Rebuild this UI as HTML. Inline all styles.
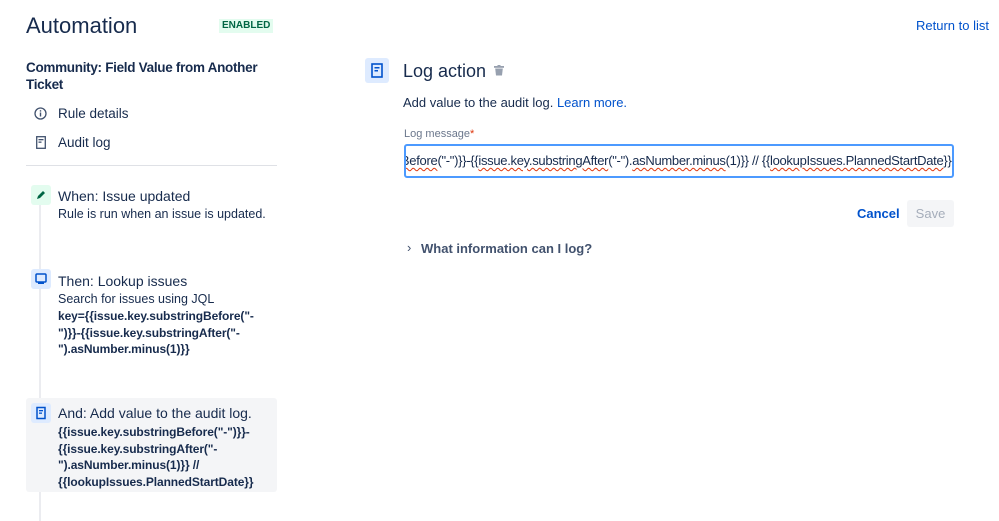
<!DOCTYPE html>
<html><head><meta charset="utf-8"><style>
body{margin:0;width:999px;height:521px;overflow:hidden;background:#fff;font-family:"Liberation Sans",sans-serif;color:#172b4d;position:relative}
.a{position:absolute;white-space:nowrap}
.ib{position:absolute;width:20px;height:20px;border-radius:3px}
.b{font-weight:bold;font-size:12px;line-height:16.7px;color:#172b4d;letter-spacing:-0.1px}
.u{text-decoration:underline wavy #de350b;text-decoration-thickness:1px;text-underline-offset:2px}
</style></head><body>
<div class="a" style="left:26px;top:13px;font-size:22px;color:#172b4d">Automation</div>
<div class="a" style="left:219px;top:19px;background:#e3fcef;color:#006644;font-size:10px;font-weight:bold;padding:1px 3px;line-height:12px">ENABLED</div>
<div class="a" style="left:916px;top:18px;font-size:13px;color:#0052cc">Return to list</div>
<div class="a" style="left:26px;top:59px;font-size:13.5px;font-weight:bold;line-height:17px;white-space:normal;width:250px;letter-spacing:-0.3px">Community: Field Value from Another Ticket</div>
<svg class="a" style="left:34px;top:107px" width="13" height="13"><circle cx="6.5" cy="6.5" r="5.5" fill="none" stroke="#42526e" stroke-width="1.3"/><rect x="5.8" y="5.5" width="1.4" height="4" fill="#42526e"/><rect x="5.8" y="3.2" width="1.4" height="1.4" fill="#42526e"/></svg>
<div class="a" style="left:58px;top:106px;font-size:13.5px;color:#172b4d">Rule details</div>
<svg class="a" style="left:36px;top:136px" width="10" height="13"><rect x="0.7" y="0.7" width="8.6" height="11.6" fill="none" stroke="#42526e" stroke-width="1.3"/><rect x="2.5" y="3" width="5" height="1.3" fill="#42526e"/><rect x="2.5" y="5.5" width="3" height="1.3" fill="#42526e"/></svg>
<div class="a" style="left:58px;top:135px;font-size:13.5px">Audit log</div>
<div class="a" style="left:26px;top:165px;width:251px;height:1px;background:#dfe1e6"></div>
<div class="a" style="left:39px;top:205px;width:2px;height:316px;background:#ebecf0"></div>
<div class="ib" style="left:31px;top:185px;background:#e3fcef"><svg width="20" height="20"><path d="M6 14l1-3 5-5 2 2-5 5z" fill="#006644"/></svg></div>
<div class="a" style="left:58px;top:188px;font-size:14px">When: Issue updated</div>
<div class="a" style="left:58px;top:207px;font-size:12.5px;color:#172b4d">Rule is run when an issue is updated.</div>
<div class="ib" style="left:31px;top:269px;background:#deebff"><svg width="20" height="20"><rect x="5" y="5" width="10" height="8" rx="1" fill="none" stroke="#0052cc" stroke-width="1.5"/><rect x="7" y="13" width="6" height="2" fill="#0052cc"/></svg></div>
<div class="a" style="left:58px;top:273px;font-size:14px">Then: Lookup issues</div>
<div class="a" style="left:58px;top:292px;font-size:12.5px">Search for issues using JQL</div>
<div class="a b" style="left:58px;top:308px">key={{issue.key.substringBefore("-<br>")}}-{{issue.key.substringAfter("-<br>").asNumber.minus(1)}}</div>
<div class="a" style="left:26px;top:398px;width:251px;height:94px;background:#f4f5f7;border-radius:3px"></div>
<div class="ib" style="left:31px;top:403px;background:#deebff"><svg width="20" height="20"><rect x="6" y="4.5" width="8" height="11" fill="none" stroke="#0052cc" stroke-width="1.5"/><rect x="8" y="7" width="4" height="1.3" fill="#0052cc"/><rect x="8" y="9.5" width="3" height="1.3" fill="#0052cc"/></svg></div>
<div class="a" style="left:58px;top:405px;font-size:14px">And: Add value to the audit log.</div>
<div class="a b" style="left:58px;top:424px">{{issue.key.substringBefore("-")}}-<br>{{issue.key.substringAfter("-<br>").asNumber.minus(1)}} //<br>{{lookupIssues.PlannedStartDate}}</div>
<div class="a" style="left:365px;top:58px;width:24px;height:25px;background:#deebff;border-radius:3px"><svg width="24" height="25"><rect x="7" y="6" width="10" height="13" fill="none" stroke="#0052cc" stroke-width="1.6"/><rect x="9.5" y="9" width="5" height="1.5" fill="#0052cc"/><rect x="9.5" y="12" width="3.5" height="1.5" fill="#0052cc"/></svg></div>
<div class="a" style="left:403px;top:61px;font-size:18px">Log action</div>
<svg class="a" style="left:494px;top:65px" width="10" height="11"><rect x="0" y="1" width="10" height="1.8" fill="#97a0af"/><rect x="3.5" y="0" width="3" height="1.5" fill="#97a0af"/><path d="M1.2 3.5h7.6l-0.8 7h-6z" fill="#97a0af"/></svg>
<div class="a" style="left:403px;top:95px;font-size:13px">Add value to the audit log. <span style="color:#0052cc">Learn more.</span></div>
<div class="a" style="left:404px;top:128px;font-size:11px;color:#6b778c">Log message<span style="color:#de350b">*</span></div>
<div class="a" style="left:404px;top:144px;border:2px solid #4c9aff;border-radius:3px;overflow:hidden;box-sizing:border-box;width:550px;height:34px"><div class="a" style="left:-12px;top:7px;font-size:13px;letter-spacing:-0.3px"><span class="u">gBefore</span>("-")}}-{{<span class="u">issue.key.substringAfter</span>("-").<span class="u">asNumber.minus</span>(1)}} // {{<span class="u">lookupIssues.PlannedStartDate</span>}}</div></div>
<div class="a" style="left:857px;top:206px;font-size:13px;font-weight:bold;color:#0052cc">Cancel</div>
<div class="a" style="left:907px;top:200px;width:47px;height:27px;background:#f4f5f7;border-radius:3px;color:#a5adba;font-size:13px;text-align:center;line-height:27px">Save</div>
<div class="a" style="left:407px;top:240px;font-size:13px;color:#42526e">›</div>
<div class="a" style="left:421px;top:241px;font-size:13px;font-weight:bold;color:#42526e">What information can I log?</div>
</body></html>
